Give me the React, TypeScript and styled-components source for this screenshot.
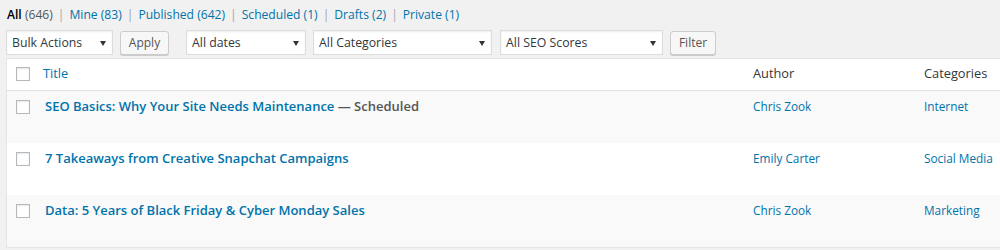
import styled, { createGlobalStyle } from "styled-components";

const GlobalStyle = createGlobalStyle`
  html, body {
    margin: 0;
    overflow: hidden;
    background: #f1f1f1;
  }
  body {
    font-family: "Open Sans", "DejaVu Sans", sans-serif;
    font-size: 13px;
    color: #444;
  }
`;

const Page = styled.div`
  padding-left: 6px;
  width: 1100px;
`;

const Views = styled.ul`
  list-style: none;
  margin: 6px 0 0;
  padding: 0 0 0 1px;
  display: flex;
  line-height: 18px;
  height: 18px;
  font-size: 12.1px;
`;

const ViewItem = styled.li`
  display: flex;
  white-space: pre;
`;

const ViewLink = styled.a<{ $current?: boolean }>`
  color: ${({ $current }) => ($current ? "#000" : "#0073aa")};
  font-weight: ${({ $current }) => ($current ? 600 : 400)};
  text-decoration: none;
`;

const Count = styled.span<{ $current?: boolean }>`
  color: ${({ $current }) => ($current ? "#555" : "#0073aa")};
  font-weight: 400;
`;

const Sep = styled.span`
  color: #a0a5aa;
  margin: 0 5px;
`;

const Toolbar = styled.div`
  display: flex;
  align-items: center;
  height: 25px;
  margin-top: 6px;
`;

const Dropdown = styled.div<{ $w: number; $gap?: number }>`
  box-sizing: border-box;
  width: ${({ $w }) => $w}px;
  height: 25px;
  margin-left: ${({ $gap = 0 }) => $gap}px;
  background: #fff;
  border: 1px solid #ddd;
  box-shadow: inset 0 1px 2px rgba(0, 0, 0, 0.07);
  display: flex;
  align-items: center;
  justify-content: space-between;
  padding: 0 6px 0 5px;
  color: #32373c;
  font-size: 12.3px;
`;

const Arrow = styled.span`
  width: 0;
  height: 0;
  border-left: 3px solid transparent;
  border-right: 3px solid transparent;
  border-top: 5px solid #333;
  margin-top: 1px;
`;

const Button = styled.button<{ $w: number; $gap?: number }>`
  box-sizing: border-box;
  width: ${({ $w }) => $w}px;
  height: 24px;
  margin-left: ${({ $gap = 0 }) => $gap}px;
  background: #f7f7f7;
  border: 1px solid #ccc;
  border-radius: 3px;
  box-shadow: 0 1px 0 #ccc;
  color: #555;
  font-family: inherit;
  font-size: 12px;
  padding: 0;
  line-height: 22px;
`;

const Table = styled.div`
  margin-top: 3px;
  background: #fff;
  border: 1px solid #e5e5e5;
  box-shadow: 0 1px 1px rgba(0, 0, 0, 0.04);
`;

const Row = styled.div<{ $head?: boolean; $alt?: boolean }>`
  display: grid;
  grid-template-columns: 36px 710px 171px 1fr;
  height: ${({ $head }) => ($head ? "31px" : "52px")};
  background: ${({ $alt }) => ($alt ? "#f9f9f9" : "#fff")};
  border-bottom: ${({ $head }) => ($head ? "1px solid #e1e1e1" : "none")};
`;

const CheckCell = styled.div<{ $head?: boolean }>`
  padding: ${({ $head }) => ($head ? "8px" : "9px")} 0 0 9px;
`;

const Box = styled.span`
  display: block;
  box-sizing: border-box;
  width: 14px;
  height: 14px;
  background: #fff;
  border: 1px solid #b4b9be;
  box-shadow: inset 0 1px 2px rgba(0, 0, 0, 0.1);
`;

const HeadCell = styled.div<{ $link?: boolean }>`
  padding-top: 5px;
  line-height: 19.5px;
  font-size: 12.8px;
  color: ${({ $link }) => ($link ? "#0073aa" : "#32373c")};
  white-space: nowrap;
`;

const TitleCell = styled.div`
  padding: 6px 0 0 2px;
  font-size: 13px;
  line-height: 19.6px;
  font-weight: 600;
  white-space: nowrap;
`;

const TitleLink = styled.a`
  color: #0073aa;
  text-decoration: none;
`;

const PostState = styled.span`
  color: #555;
`;

const Cell = styled.div`
  padding-top: 6px;
  line-height: 19.5px;
  font-size: 11.8px;
  white-space: nowrap;
`;

const CellLink = styled.a`
  color: #0073aa;
  text-decoration: none;
`;

const views = [
  { label: "All", count: 646, current: true },
  { label: "Mine", count: 83 },
  { label: "Published", count: 642 },
  { label: "Scheduled", count: 1 },
  { label: "Drafts", count: 2 },
  { label: "Private", count: 1 },
];

const posts = [
  { title: "SEO Basics: Why Your Site Needs Maintenance", state: "Scheduled", author: "Chris Zook", category: "Internet" },
  { title: "7 Takeaways from Creative Snapchat Campaigns", author: "Emily Carter", category: "Social Media" },
  { title: "Data: 5 Years of Black Friday & Cyber Monday Sales", author: "Chris Zook", category: "Marketing" },
];

function App() {
  return (
    <Page>
      <GlobalStyle />
      <Views>
        {views.map((v, i) => (
          <ViewItem key={v.label}>
            <ViewLink $current={v.current}>
              {v.label} <Count $current={v.current}>({v.count})</Count>
            </ViewLink>
            {i < views.length - 1 && <Sep>|</Sep>}
          </ViewItem>
        ))}
      </Views>

      <Toolbar>
        <Dropdown $w={107}>
          Bulk Actions <Arrow />
        </Dropdown>
        <Button $w={49} $gap={7}>Apply</Button>
        <Dropdown $w={120} $gap={17}>
          All dates <Arrow />
        </Dropdown>
        <Dropdown $w={179} $gap={7}>
          All Categories <Arrow />
        </Dropdown>
        <Dropdown $w={163} $gap={8}>
          All SEO Scores <Arrow />
        </Dropdown>
        <Button $w={46} $gap={7}>Filter</Button>
      </Toolbar>

      <Table>
        <Row $head>
          <CheckCell $head>
            <Box />
          </CheckCell>
          <HeadCell $link>Title</HeadCell>
          <HeadCell>Author</HeadCell>
          <HeadCell>Categories</HeadCell>
        </Row>
        {posts.map((p, i) => (
          <Row key={p.title} $alt={i % 2 === 0}>
            <CheckCell>
              <Box />
            </CheckCell>
            <TitleCell>
              <TitleLink>{p.title}</TitleLink>
              {p.state && <PostState> — {p.state}</PostState>}
            </TitleCell>
            <Cell>
              <CellLink>{p.author}</CellLink>
            </Cell>
            <Cell>
              <CellLink>{p.category}</CellLink>
            </Cell>
          </Row>
        ))}
      </Table>
    </Page>
  );
}

export default App;
